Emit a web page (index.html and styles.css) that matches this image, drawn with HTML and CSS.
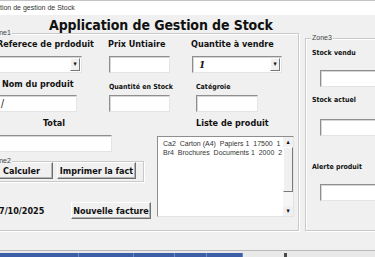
FILE: index.html
```html
<!DOCTYPE html>
<html lang="fr">
<head>
  <meta charset="UTF-8">
  <meta name="viewport" content="width=device-width, initial-scale=1.0">
  <title>Application de gestion de Stock</title>
  <link rel="stylesheet" href="styles.css">
</head>
<body>
  <div class="title-bar"><span class="title-text">Application de gestion de Stock</span></div>

  <div class="form">
    <h1 class="form-title">Application de Gestion de Stock</h1>

    <div class="zones">
      <!-- Zone1 : facture -->
      <div class="zone zone1">
        <span class="zone-label">Zone1</span>
        <div class="fields">
          <label class="lbl lbl-lg ref-lbl">Referece de prdoduit</label>
          <label class="lbl lbl-lg">Prix Untiaire</label>
          <label class="lbl lbl-lg">Quantite à vendre</label>

          <div class="combo ref-combo"><span class="combo-value"></span><span class="combo-btn">▾</span></div>
          <div class="input prix-input"></div>
          <div class="combo qte-combo"><span class="combo-value">1</span><span class="combo-btn">▾</span></div>

          <label class="lbl lbl-lg nom-lbl">Nom du produit</label>
          <label class="lbl lbl-sm stock-lbl">Quantité en Stock</label>
          <label class="lbl lbl-sm cat-lbl">Catégroie</label>

          <div class="input nom-input">/</div>
          <div class="input stock-input"></div>
          <div class="input cat-input"></div>

          <label class="lbl lbl-lg total-lbl">Total</label>
          <span></span>
          <label class="lbl lbl-lg liste-lbl">Liste de produit</label>
        </div>

        <div class="lower">
          <div class="lower-left">
            <div class="input total-input"></div>
            <div class="zone zone2">
              <span class="zone-label">Zone2</span>
              <button class="btn calc-btn">Calculer</button>
              <button class="btn print-btn">Imprimer la fact</button>
            </div>
            <div class="date-row">
              <span class="date">7/10/2025</span>
              <button class="btn new-btn">Nouvelle facture</button>
            </div>
          </div>

          <div class="listbox">
            <div class="list-items">
              <div class="list-item">Ca2  Carton (A4)  Papiers 1  17500  1</div>
              <div class="list-item">Br4  Brochures  Documents 1  2000  2</div>
            </div>
            <div class="scrollbar">
              <span class="scroll-arrow">▴</span>
              <span class="scroll-thumb"></span>
              <span class="scroll-track"></span>
              <span class="scroll-arrow">▾</span>
            </div>
          </div>
        </div>
      </div>

      <!-- Zone3 : stock -->
      <div class="zone zone3">
        <span class="zone-label">Zone3</span>
        <label class="lbl lbl-sm side-lbl vendu-lbl">Stock vendu</label>
        <div class="input side-input vendu-input"></div>
        <label class="lbl lbl-sm side-lbl actuel-lbl">Stock actuel</label>
        <div class="input side-input actuel-input"></div>
        <label class="lbl lbl-sm side-lbl alerte-lbl">Alerte produit</label>
        <div class="input side-input alerte-input"></div>
      </div>
    </div>
  </div>

  <div class="sheet-bar">
    <div class="tabs">
      <span class="tab" style="width: 79px"></span>
      <span class="tab" style="width: 55px"></span>
      <span class="tab" style="width: 41px"></span>
      <span class="tab" style="width: 32px"></span>
      <span class="tab" style="width: 36px"></span>
    </div>
    <span class="splitter"></span>
  </div>
</body>
</html>
```

FILE: styles.css
```css
body {
  margin: 0;
  width: 375px;
  height: 257px;
  overflow: hidden;
  background: #f0f0f0;
  font-family: "DejaVu Sans", sans-serif;
  font-stretch: condensed;
  color: #111;
}

/* barre de titre de la fenêtre */
.title-bar {
  height: 14px;
  background: #fff;
  border-top: 1px solid #c4c4c4;
  overflow: hidden;
  white-space: nowrap;
  font-family: "Liberation Sans", sans-serif;
  font-stretch: normal;
  font-size: 7px;
  line-height: 13px;
}

.title-text {
  margin-left: -23px;
  color: #333;
}

.form-title {
  margin: 3px 0 0 49px;
  font-size: 14px;
  line-height: 14px;
  font-weight: bold;
  letter-spacing: -0.1px;
}

.zones {
  display: flex;
  align-items: flex-start;
  margin-top: 1px;
}

/* cadres */
.zone {
  position: relative;
  box-sizing: border-box;
  border: 1px solid #c9c9c9;
  box-shadow: inset 1px 1px 0 #fff, 1px 1px 0 #fff;
}

.zone-label {
  position: absolute;
  top: -5px;
  left: 1px;
  padding: 0 1px;
  background: #f0f0f0;
  font-family: "Liberation Sans", sans-serif;
  font-stretch: normal;
  font-size: 7px;
  line-height: 8px;
  color: #444;
}

.zone1 {
  flex: none;
  width: 311px;
  height: 198px;
  margin-left: -12px;
  padding: 0 3px 0 7px;
}

.zone3 {
  flex: none;
  width: 80px;
  height: 193px;
  margin-top: 5px;
  margin-left: 6px;
  padding-left: 5px;
}

.zone3 .zone-label {
  left: 5px;
}

/* libellés */
.lbl {
  display: block;
  font-weight: bold;
  white-space: nowrap;
}

.lbl-lg {
  font-size: 9px;
  line-height: 12px;
}

.lbl-sm {
  font-size: 7px;
  line-height: 10px;
}

/* champs */
.input,
.combo {
  box-sizing: border-box;
  height: 17px;
  background: #fff;
  border: 1px solid;
  border-color: #8e8e8e #e4e4e4 #e4e4e4 #8e8e8e;
  box-shadow: inset 1px 1px 0 #d6d6d6;
}

.input {
  padding-left: 4px;
  font-size: 10px;
  line-height: 15px;
}

.combo {
  display: flex;
  align-items: center;
  padding: 1px;
}

.combo-value {
  flex: 1;
  padding-left: 5px;
  font-family: "DejaVu Serif", serif;
  font-style: italic;
  font-weight: bold;
  font-size: 10px;
}

.combo-btn {
  width: 10px;
  height: 13px;
  box-sizing: border-box;
  background: #f0f0f0;
  border: 1px solid;
  border-color: #fff #777 #777 #fff;
  font-size: 7px;
  line-height: 11px;
  text-align: center;
}

.fields {
  display: grid;
  grid-template-columns: 112px 83px 1fr;
  grid-template-rows: 22px 17px 22px 17px 19px;
}

.fields .lbl-lg {
  margin-top: 4px;
}

.ref-lbl { margin-left: 1px; }
.ref-combo { width: 86px; }
.prix-input { width: 61px; margin-left: 1px; }
.qte-combo { width: 90px; margin-left: 1px; }
.fields .nom-lbl { margin: 5px 0 0 6px; }
.stock-lbl { margin: 9px 0 0 1px; }
.cat-lbl { margin: 9px 0 0 5px; }
.nom-input { width: 81px; }
.stock-input { width: 61px; margin-left: 1px; }
.cat-input { width: 62px; margin-left: 5px; }
.fields .total-lbl { margin: 5px 0 0 47px; }
.fields .liste-lbl { margin: 5px 0 0 5px; }

/* partie basse de la zone1 */
.lower {
  display: flex;
  margin-top: 4px;
}

.lower-left {
  width: 161px;
  flex: none;
}

.total-input {
  width: 116px;
}

.zone2 {
  display: flex;
  gap: 4px;
  width: 156px;
  height: 21px;
  margin: 9px 0 0 -8px;
  padding-left: 1px;
}

.btn {
  box-sizing: border-box;
  height: 17px;
  padding: 0;
  background: #f0f0f0;
  border: 1px solid;
  border-color: #fff #6f6f6f #6f6f6f #fff;
  box-shadow: inset -1px -1px 0 #b4b4b4;
  font-family: "DejaVu Sans", sans-serif;
  font-stretch: condensed;
  font-size: 9px;
  font-weight: bold;
  white-space: nowrap;
  color: #111;
}

.calc-btn { width: 63px; }
.print-btn { width: 79px; }

.date-row {
  display: flex;
  align-items: center;
  margin-top: 20px;
}

.date {
  width: 72px;
  margin-left: 3px;
  font-size: 9px;
  font-weight: bold;
}

.new-btn { width: 80px; }

/* liste de produits */
.listbox {
  display: flex;
  box-sizing: border-box;
  width: 137px;
  height: 81px;
  margin-top: 1px;
  background: #fff;
  border: 1px solid;
  border-color: #8e8e8e #e4e4e4 #e4e4e4 #8e8e8e;
}

.list-items {
  flex: 1;
  padding: 2px 0 0 5px;
  overflow: hidden;
}

.list-item {
  font-family: "Liberation Sans", sans-serif;
  font-stretch: normal;
  font-size: 7px;
  line-height: 9px;
  white-space: pre;
  color: #333;
}

.scrollbar {
  display: flex;
  flex-direction: column;
  width: 10px;
  background: #f6f6f6;
}

.scroll-arrow {
  height: 10px;
  font-size: 7px;
  line-height: 10px;
  text-align: center;
  background: #f0f0f0;
}

.scroll-thumb {
  height: 45px;
  box-sizing: border-box;
  border: 1px solid;
  border-color: #fff #7a7a7a #7a7a7a #fff;
  background: #f0f0f0;
}

.scroll-track {
  flex: 1;
}

/* zone3 */
.side-lbl {
  margin-left: 1px;
}

.side-input {
  width: 70px;
  margin-left: 9px;
}

.vendu-lbl { margin-top: 9px; }
.vendu-input { margin-top: 12px; }
.actuel-lbl { margin-top: 8px; }
.actuel-input { margin-top: 14px; }
.alerte-lbl { margin-top: 26px; }
.alerte-input { margin-top: 12px; }

/* onglets du bas */
.sheet-bar {
  display: flex;
  height: 5px;
  margin-top: 19px;
  padding-top: 2px;
  border-top: 1px solid #b9b9b9;
  background: #e9e9e9;
}

.tabs {
  display: flex;
  width: 243px;
}

.tab {
  height: 100%;
  background: #3b5ea6;
  border-right: 1px solid #6d88c0;
  box-sizing: border-box;
}

.splitter {
  width: 3px;
  margin-left: 41px;
  background: #4a4a4a;
}
```
